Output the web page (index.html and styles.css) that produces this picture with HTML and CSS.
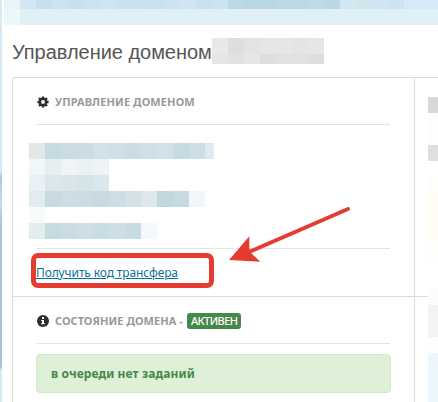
FILE: index.html
```
<!DOCTYPE html>
<html lang="ru">
<head>
<meta charset="utf-8">
<title>Управление доменом</title>
<link rel="stylesheet" href="styles.css">
</head>
<body>
<div class="edge"></div>
<main class="page">
  <svg class="banner" width="434" height="25" shape-rendering="crispEdges">
    <rect width="434" height="25" fill="#dff0f7"/><rect y="9" width="16" height="16" fill="#ecf7fa"/>
    <rect width="16" height="9" fill="#e7f4f9"/><rect x="16" width="16" height="9" fill="#d2e7f3"/><rect x="32" width="16" height="9" fill="#c7deec"/><rect x="48" width="16" height="9" fill="#cde3ee"/><rect x="64" width="16" height="9" fill="#c7e0eb"/><rect x="80" width="16" height="9" fill="#cce2ed"/><rect x="96" width="16" height="9" fill="#cfe5f0"/><rect x="112" width="32" height="9" fill="#cce1ee"/><rect x="144" width="16" height="9" fill="#c9e0ed"/><rect x="160" width="16" height="9" fill="#cde3ef"/><rect x="176" width="16" height="9" fill="#d0e5f1"/><rect x="192" width="16" height="9" fill="#cae0ed"/><rect x="208" width="16" height="9" fill="#cde3ef"/><rect x="224" width="16" height="9" fill="#b9dae4"/><rect x="240" width="32" height="9" fill="#b7d7e5"/><rect x="272" width="32" height="9" fill="#bbd9e4"/><rect x="304" width="16" height="9" fill="#bcdae7"/><rect x="320" width="16" height="9" fill="#b9d8e4"/><rect x="336" width="16" height="9" fill="#d1e7f2"/><rect x="352" width="16" height="9" fill="#d0e5ee"/><rect x="368" width="16" height="9" fill="#d0e5f0"/><rect x="384" width="16" height="9" fill="#cde4ee"/><rect x="400" width="16" height="9" fill="#d6e9f5"/><rect x="416" width="18" height="9" fill="#d6ebf6"/>
  </svg>
  <header class="title">
    <h1>Управление доменом</h1>
    <svg width="112" height="26" shape-rendering="crispEdges">
      <rect width="112" height="26" fill="#e6e6e6"/><rect width="16" height="16" fill="#eae8e6"/><rect x="16" width="16" height="16" fill="#dddfde"/><rect x="32" width="16" height="16" fill="#e3e3e3"/><rect x="80" width="16" height="16" fill="#e3e5e4"/><rect y="16" width="16" height="10" fill="#e5e5e6"/><rect x="16" y="16" width="16" height="10" fill="#e0e2e1"/><rect x="48" y="16" width="16" height="10" fill="#dbdedc"/><rect x="64" y="16" width="16" height="10" fill="#e1e1e1"/><rect x="80" y="16" width="16" height="10" fill="#e0e1e4"/><rect x="96" y="16" width="16" height="10" fill="#dedede"/>
    </svg>
  </header>
  <div class="panel">
    <section class="cell manage">
      <h2 class="caption"><svg class="icon" width="12" height="12" viewBox="0 0 12 12"><g stroke="#2c2f31" stroke-width="2.3"><path d="M6 .4v11.2M.4 6h11.2M2 2l8 8M10 2l-8 8"/></g><circle cx="6" cy="6" r="3.2" fill="#fff" stroke="#2c2f31" stroke-width="2.5"/></svg><span class="manage-label">УПРАВЛЕНИЕ ДОМЕНОМ</span></h2>
      <svg class="mosaic" width="185" height="96" shape-rendering="crispEdges">
        <rect width="16" height="16" fill="#e0e8ea"/><rect x="16" width="16" height="16" fill="#c5dae1"/><rect x="32" width="16" height="16" fill="#c9dce2"/><rect x="48" width="16" height="16" fill="#cbdce3"/><rect x="64" width="16" height="16" fill="#d1e1e8"/><rect x="80" width="16" height="16" fill="#cedfe6"/><rect x="96" width="16" height="16" fill="#cddce4"/><rect x="112" width="16" height="16" fill="#cde0e7"/><rect x="128" width="16" height="16" fill="#d2e0e8"/><rect x="144" width="16" height="16" fill="#c6dbe1"/><rect x="160" width="16" height="16" fill="#cddee5"/><rect x="176" width="9" height="16" fill="#deeaef"/>
        <rect y="16" width="16" height="16" fill="#f1f6f6"/><rect x="16" y="16" width="16" height="16" fill="#e5eef0"/><rect x="32" y="16" width="16" height="16" fill="#f0f4f8"/><rect x="48" y="16" width="16" height="16" fill="#ebf1f4"/><rect x="64" y="16" width="16" height="16" fill="#eef3f7"/>
        <rect y="32" width="16" height="16" fill="#e8f1f3"/><rect x="16" y="32" width="16" height="16" fill="#dbe7ed"/><rect x="32" y="32" width="16" height="16" fill="#d8e6ec"/><rect x="48" y="32" width="16" height="16" fill="#d5e4e9"/><rect x="64" y="32" width="16" height="16" fill="#dae7ee"/>
        <rect y="48" width="16" height="16" fill="#e2ebed"/><rect x="16" y="48" width="16" height="16" fill="#c7dae1"/><rect x="32" y="48" width="16" height="16" fill="#ccdde5"/><rect x="48" y="48" width="16" height="16" fill="#cbdde3"/><rect x="64" y="48" width="16" height="16" fill="#c6dae0"/><rect x="80" y="48" width="16" height="16" fill="#cbdee5"/><rect x="96" y="48" width="16" height="16" fill="#d4e1e6"/><rect x="112" y="48" width="16" height="16" fill="#dce7ee"/><rect x="128" y="48" width="16" height="16" fill="#c0d7df"/><rect x="144" y="48" width="16" height="16" fill="#c7dae1"/><rect x="160" y="48" width="16" height="16" fill="#f1f6fa"/>
        <rect y="64" width="16" height="16" fill="#f6fcfb"/>
        <rect y="80" width="16" height="16" fill="#e3edee"/><rect x="16" y="80" width="16" height="16" fill="#c6dae1"/><rect x="32" y="80" width="16" height="16" fill="#c8dce2"/><rect x="48" y="80" width="16" height="16" fill="#cfdde5"/><rect x="64" y="80" width="16" height="16" fill="#c9dde4"/><rect x="80" y="80" width="16" height="16" fill="#cfdde5"/><rect x="96" y="80" width="16" height="16" fill="#c7dbe2"/><rect x="112" y="80" width="16" height="16" fill="#f4f8fd"/>
      </svg>
      <div class="action"><a class="transfer" href="#">Получить код трансфера</a></div>
    </section>
    <aside class="side side-top"></aside>
    <section class="cell state">
      <h2 class="caption"><svg class="icon" width="12" height="12" viewBox="0 0 12 12"><circle cx="6" cy="6" r="6" fill="#2c2f31"/><path d="M5 2h2v2H5zM4.200 5H7v3.200h.9v1.100H4.100V8.200H5V6h-.8z" fill="#fff"/></svg><span class="state-label">СОСТОЯНИЕ ДОМЕНА -</span><span class="badge">АКТИВЕН</span></h2>
      <p class="notice"><span>в очереди нет заданий</span></p>
    </section>
    <aside class="side"></aside>
  </div>
</main>
<svg class="side-mosaic" width="10" height="305" shape-rendering="crispEdges">
  <rect width="10" height="16" fill="#d8d8d8"/><rect y="16" width="10" height="32" fill="#fdfdfd"/><rect y="48" width="10" height="16" fill="#dfdfdf"/><rect y="80" width="10" height="16" fill="#fffdf9"/><rect y="96" width="10" height="48" fill="#fefbf2"/><rect y="144" width="10" height="16" fill="#fffefc"/><rect y="192" width="10" height="16" fill="#fcfcfc"/><rect y="208" width="10" height="32" fill="#f3f3f3"/><rect y="240" width="10" height="16" fill="#fdfefe"/><rect y="256" width="10" height="16" fill="#edf6fb"/><rect y="272" width="10" height="33" fill="#ebf5fc"/>
</svg>
<svg class="marks" width="438" height="402">
  <rect x="33.500" y="255.500" width="178" height="30" rx="4.500" fill="none" stroke="#e63c30" stroke-width="5"/>
  <path d="M348 209L249 252" stroke="#e63c30" stroke-width="4" stroke-linecap="round"/>
  <path d="M229 260L249.300 236.300V249L251 253L260.300 261.700z" fill="#e63c30"/>
</svg>
</body>
</html>
```
FILE: styles.css
```
* { box-sizing: border-box; }
body {
  margin: 0;
  width: 438px;
  height: 402px;
  overflow: hidden;
  display: flex;
  position: relative;
  background: #fff;
  font-family: "Noto Sans", sans-serif;
}
svg { display: block; flex: none; }
.edge {
  width: 2px;
  flex: none;
  background: linear-gradient(#d5eaf4 0 171px, #abc9dc 177px, #c2dce9 203px, #abc8da 220px, #a8c5d5 366px, #d3ebf2 371px);
}
.page { flex: 1; min-width: 0; }
.banner { margin-left: 2px; }
.title {
  display: flex;
  height: 52px;
  padding: 13px 0 0 10px;
}
h1 {
  width: 200px;
  margin: 0;
  font: 400 20px/28px "Liberation Sans", sans-serif;
  letter-spacing: -.03px;
  white-space: nowrap;
  color: #555;
}
.panel {
  height: 330px;
  margin-left: 10px;
  display: grid;
  grid-template-columns: 402px 1fr;
  grid-template-rows: 219px 1fr;
  border: 1px solid #dcdcdc;
  border-width: 1px 0 0 1px;
  border-radius: 4px 0 0 0;
}
.cell { padding: 0 24px; border-right: 1px solid #dcdcdc; }
.manage, .side-top { border-bottom: 1px solid #dcdcdc; }
.caption {
  display: flex;
  align-items: center;
  height: 47px;
  margin: 0;
  padding-top: 2px;
  border-bottom: 1px solid #e3e3e3;
  font-size: 11px;
  line-height: 16px;
  font-weight: 700;
  color: #999;
  white-space: nowrap;
}
.icon { margin-right: 6px; }
.manage-label { letter-spacing: .09px; }
.state-label { letter-spacing: .05px; }
.mosaic { margin: 18px 0 0 -8px; }
.action { margin-top: 9px; border-top: 1px solid #e3e3e3; padding-top: 15px; line-height: 17px; }
.transfer {
  display: block;
  width: max-content;
  margin-left: -1px;
  font-size: 12px;
  letter-spacing: -.12px;
  color: #08719b;
}
.badge {
  width: 54px;
  height: 16px;
  margin-left: 4px;
  padding: 0 4px;
  border-radius: 3px;
  background: #468847;
  color: #fff;
  font-size: 11px;
  font-weight: 500;
  letter-spacing: -.55px;
}
.notice {
  width: 355px;
  height: 39px;
  margin: 10px 0 0 -1px;
  padding: 0 14px;
  border: 1px solid #d1e9c4;
  border-radius: 4px;
  background: #dff0d8;
  color: #468847;
  font-size: 12px;
  line-height: 37px;
  font-weight: 700;
  letter-spacing: .1px;
}
.side-mosaic { position: absolute; left: 428px; top: 97px; }
.marks { position: absolute; left: 0; top: 0; }
```
